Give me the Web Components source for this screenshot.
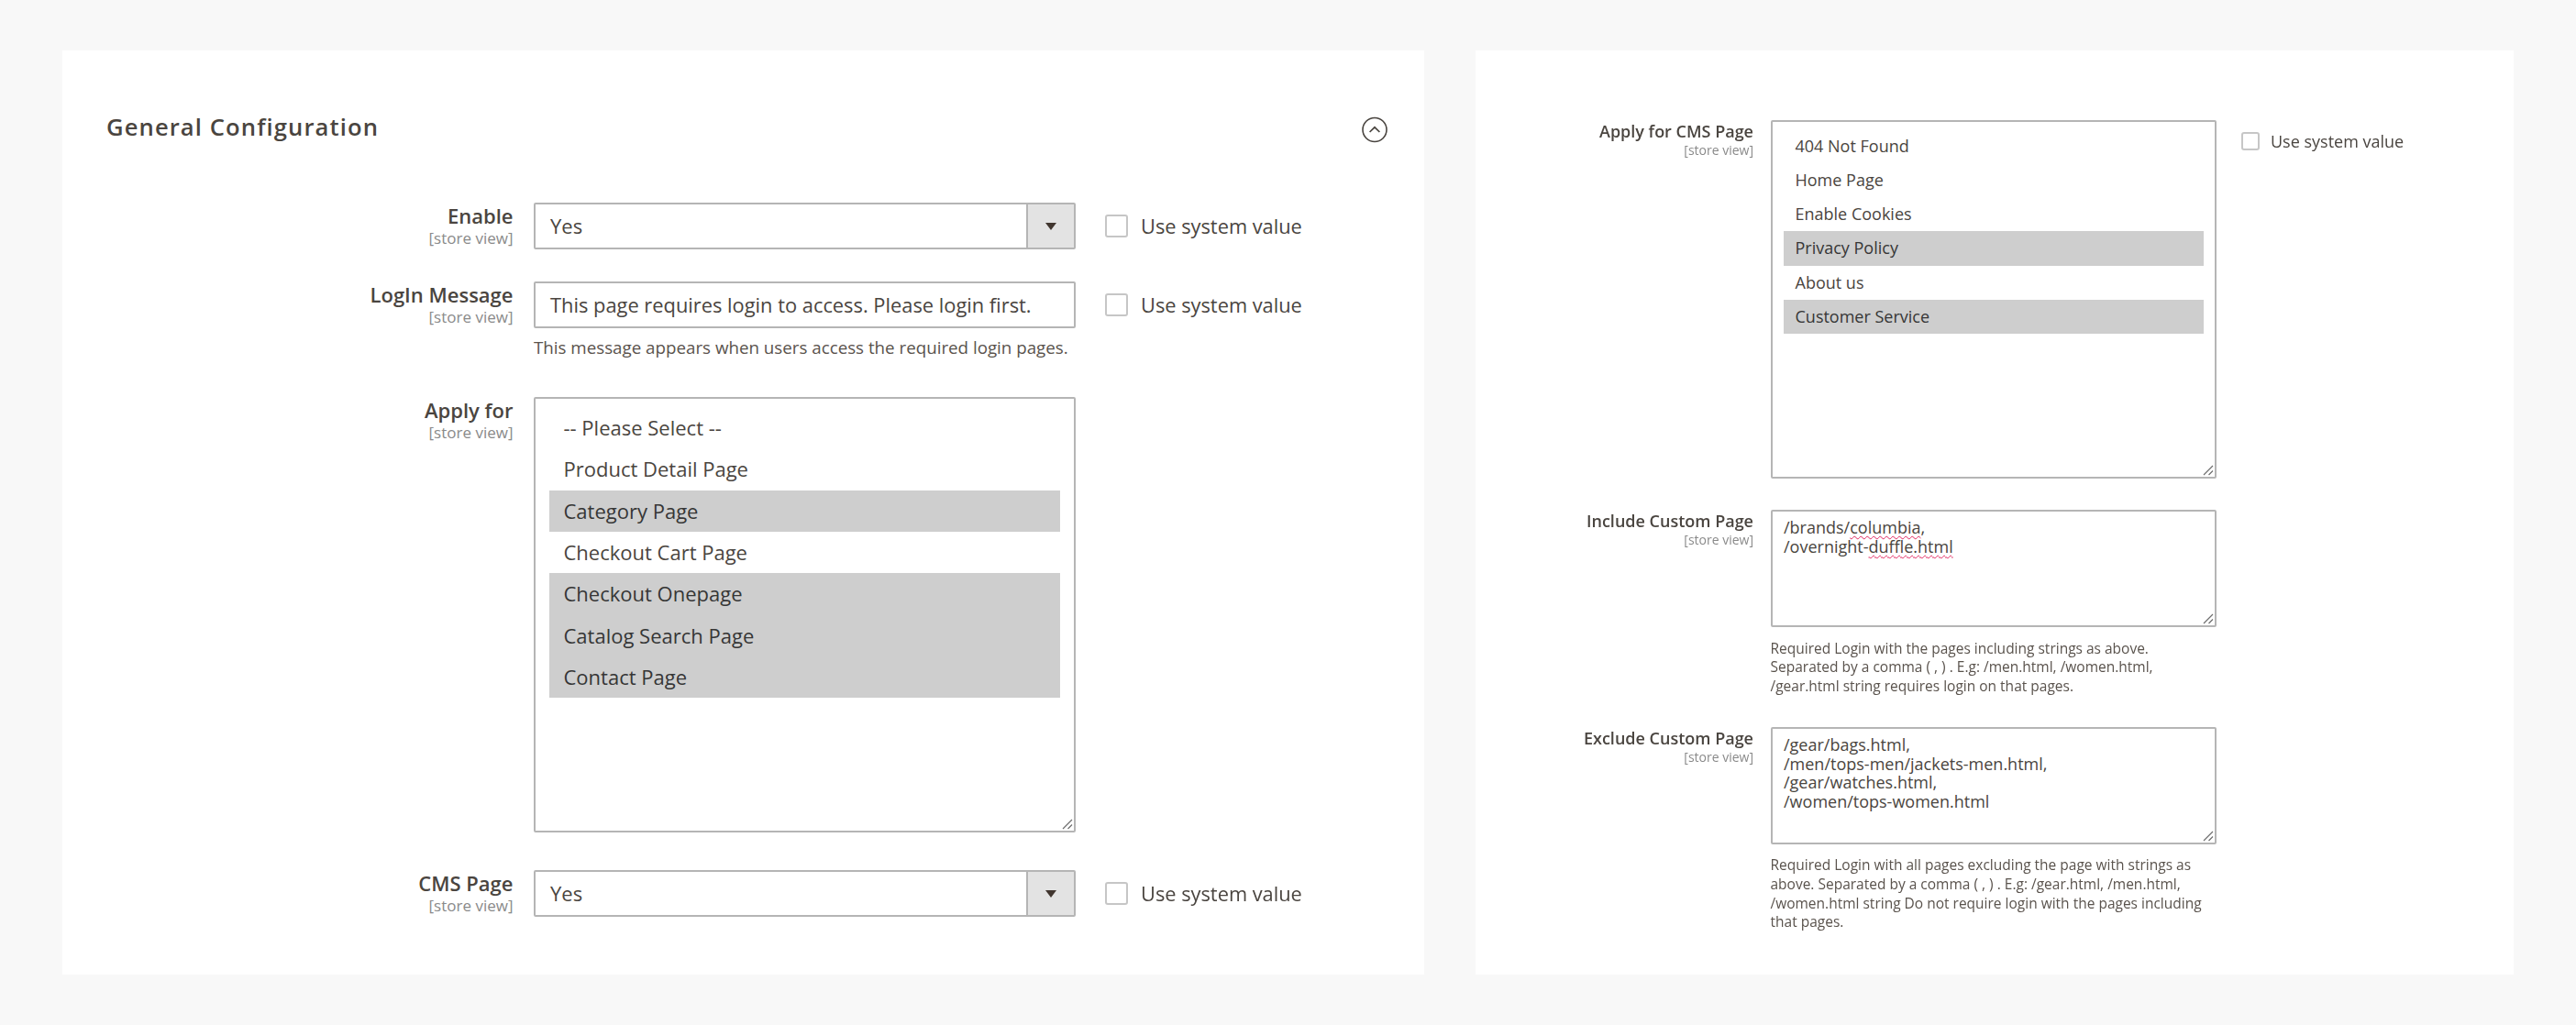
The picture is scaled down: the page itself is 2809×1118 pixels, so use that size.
<!DOCTYPE html>
<html lang="en">
<head>
<meta charset="utf-8">
<title>General Configuration</title>
<style>
    html, body { margin: 0; padding: 0; }
    body { background: #f8f8f8; font-family: "Open Sans", "Noto Sans", sans-serif; color: #4a4540; }
</style>
</head>
<body>

<template id="tpl-page">
    <style>
        /* the reference is a soft upscale, so the whole page is softened a little */
        :host { display: flex; gap: 56.5px; padding: 55px 68px; box-sizing: border-box; width: 2809px; height: 1118px; align-items: flex-start; filter: blur(.5px); }
    </style>
    <slot></slot>
</template>

<template id="tpl-card">
    <style>
        :host { display: flex; flex-direction: column; box-sizing: border-box; background: #fff; height: 1008px; flex: none; }
    </style>
    <slot></slot>
</template>

<template id="tpl-heading">
    <style>
        :host { display: flex; align-items: center; justify-content: space-between; height: 40px; margin: 0 40px 60px 48px; }
        h2 { margin: -4px 0 0; font-size: 25.6px; font-weight: 600; letter-spacing: 1.1px; line-height: 40px; color: #4a4540; }
        svg { display: block; width: 28px; height: 29px; }
    </style>
    <h2><slot></slot></h2>
    <svg viewBox="0 0 28 29" fill="none" stroke="#4a4540">
        <circle cx="14" cy="14.5" r="13" stroke-width="1.6"/>
        <path d="M8.6 17 14 11.8 19.4 17" stroke-width="1.7"/>
    </svg>
</template>

<template id="tpl-field">
    <style>
        :host { display: grid; grid-template-columns: var(--label-w) var(--ctl-w) auto; column-gap: 0; align-items: start; margin-bottom: var(--after, 0); }
        .label { text-align: right; padding-right: var(--label-gap); }
        .name { font-size: var(--label-size); line-height: var(--label-line); margin-top: -1px; font-weight: 600; color: #4a4540; }
        .scope { font-size: var(--scope-size); line-height: var(--scope-line); margin-top: 1px; color: #8a8a8a; }
        .side { padding-left: var(--side-gap); }
        ::slotted([slot="help"]) { display: block; }
    </style>
    <div class="label">
        <div class="name" id="name"></div>
        <div class="scope">[store view]</div>
    </div>
    <div class="control">
        <slot></slot>
        <slot name="help"></slot>
    </div>
    <div class="side"><slot name="side"></slot></div>
</template>

<template id="tpl-select">
    <style>
        :host { display: flex; box-sizing: border-box; height: var(--ctl-h); border: 2px solid #b5b5b5; border-radius: 2px; background: #fff; align-items: stretch; }
        .value { flex: 1; padding-left: 16px; font-size: var(--ctl-size); line-height: 47px; }
        .addon { flex: none; width: 52px; box-sizing: border-box; background: #e3e3e3; border-left: 2px solid #b5b5b5; display: flex; align-items: center; justify-content: center; }
        svg { display: block; width: 12px; height: 8px; }
    </style>
    <div class="value"><slot></slot></div>
    <div class="addon">
        <svg viewBox="0 0 12 8"><path d="M0 0h12L6 8z" fill="#41362f"/></svg>
    </div>
</template>

<template id="tpl-text">
    <style>
        :host { display: block; box-sizing: border-box; height: var(--ctl-h); border: 2px solid #b5b5b5; border-radius: 2px; background: #fff; padding-left: 16px; font-size: 21.85px; line-height: 47px; white-space: nowrap; overflow: hidden; }
    </style>
    <slot></slot>
</template>

<template id="tpl-listbox">
    <style>
        :host { display: block; position: relative; box-sizing: border-box; height: var(--box-h); border: 2px solid #b5b5b5; border-radius: 2px; background: #fff; padding: var(--list-py) var(--list-px) 0; font-size: var(--ctl-size); }
        svg { position: absolute; right: 1px; bottom: 1px; width: 13px; height: 13px; }
    </style>
    <slot></slot>
    <svg viewBox="0 0 13 13" stroke="#6e6e6e" stroke-width="1.2" fill="none"><path d="M2 12 12 2M7.5 12 12 7.5"/></svg>
</template>

<template id="tpl-option">
    <style>
        :host { display: block; height: var(--opt-h); line-height: var(--opt-h); padding-left: var(--opt-px); color: #4a4540; white-space: nowrap; }
        :host([selected]) { background: #cecece; color: #363636; }
    </style>
    <slot></slot>
</template>

<template id="tpl-area">
    <style>
        :host { display: block; position: relative; box-sizing: border-box; height: var(--box-h); border: 2px solid #b5b5b5; border-radius: 2px; background: #fff; padding: 7px 12.5px 0; font-size: var(--ctl-size); line-height: 20.65px; color: #4a4540; }
        svg { position: absolute; right: 1px; bottom: 1px; width: 13px; height: 13px; }
        ::slotted(span) { text-decoration: underline wavy #e0245e 1px; text-underline-offset: 2px; }
    </style>
    <slot></slot>
    <svg viewBox="0 0 13 13" stroke="#6e6e6e" stroke-width="1.2" fill="none"><path d="M2 12 12 2M7.5 12 12 7.5"/></svg>
</template>

<template id="tpl-use">
    <style>
        :host { display: flex; align-items: center; height: var(--use-h); font-size: var(--use-size); white-space: nowrap; color: #4a4540; }
        i { display: block; flex: none; box-sizing: border-box; width: var(--check); height: var(--check); border: 2px solid #c6c6c6; border-radius: 3px; background: #fff; margin-right: var(--check-gap); }
    </style>
    <i></i><slot></slot>
</template>

<template id="tpl-help">
    <style>
        :host { display: block; margin-top: var(--help-mt); font-size: var(--help-size); line-height: var(--help-line); color: #5a534d; white-space: nowrap; }
    </style>
    <slot></slot>
</template>

<cfg-page>
    <cfg-card style="width:1484.5px;padding-top:66px;
        --label-w:514px;--label-gap:22.5px;--ctl-w:591px;--side-gap:31.5px;
        --label-size:22px;--label-line:30px;--scope-size:17px;--scope-line:18px;
        --ctl-h:51px;--ctl-size:22px;--use-h:50px;--use-size:21.8px;--check:25px;--check-gap:14.5px;
        --help-mt:8px;--help-size:18.75px;--help-line:26px;
        --list-py:9px;--list-px:15px;--opt-h:45.33px;--opt-px:15.5px">
        <cfg-heading>General Configuration</cfg-heading>

        <cfg-field name="Enable" style="--after:35px">
            <cfg-select>Yes</cfg-select>
            <cfg-use slot="side">Use system value</cfg-use>
        </cfg-field>

        <cfg-field name="LogIn Message" style="--after:41px">
            <cfg-text>This page requires login to access. Please login first.</cfg-text>
            <cfg-help slot="help">This message appears when users access the required login pages.</cfg-help>
            <cfg-use slot="side">Use system value</cfg-use>
        </cfg-field>

        <cfg-field name="Apply for" style="--after:41px;--box-h:475px">
            <cfg-listbox>
                <cfg-option>-- Please Select --</cfg-option>
                <cfg-option>Product Detail Page</cfg-option>
                <cfg-option selected>Category Page</cfg-option>
                <cfg-option>Checkout Cart Page</cfg-option>
                <cfg-option selected>Checkout Onepage</cfg-option>
                <cfg-option selected>Catalog Search Page</cfg-option>
                <cfg-option selected>Contact Page</cfg-option>
            </cfg-listbox>
        </cfg-field>

        <cfg-field name="CMS Page">
            <cfg-select>Yes</cfg-select>
            <cfg-use slot="side">Use system value</cfg-use>
        </cfg-field>
    </cfg-card>

    <cfg-card style="width:1132px;padding-top:76px;
        --label-w:321.5px;--label-gap:18.5px;--ctl-w:486.5px;--side-gap:27px;
        --label-size:18px;--label-line:26px;--scope-size:14px;--scope-line:14px;
        --ctl-size:18px;--use-h:45px;--use-size:18px;--check:20px;--check-gap:12px;
        --help-mt:12.5px;--help-size:15.5px;--help-line:20.65px;
        --list-py:7.5px;--list-px:12px;--opt-h:37.33px;--opt-px:13px">
        <cfg-field name="Apply for CMS Page" style="--after:34px;--box-h:391px">
            <cfg-listbox>
                <cfg-option>404 Not Found</cfg-option>
                <cfg-option>Home Page</cfg-option>
                <cfg-option>Enable Cookies</cfg-option>
                <cfg-option selected>Privacy Policy</cfg-option>
                <cfg-option>About us</cfg-option>
                <cfg-option selected>Customer Service</cfg-option>
            </cfg-listbox>
            <cfg-use slot="side">Use system value</cfg-use>
        </cfg-field>

        <cfg-field name="Include Custom Page" style="--after:34.5px;--box-h:128px">
            <cfg-area>/brands/<span>columbia</span>,<br>/overnight-<span>duffle.html</span></cfg-area>
            <cfg-help slot="help">Required Login with the pages including strings as above.<br>Separated by a comma ( , ) . E.g: /men.html, /women.html,<br>/gear.html string requires login on that pages.</cfg-help>
        </cfg-field>

        <cfg-field name="Exclude Custom Page" style="--box-h:128px">
            <cfg-area>/gear/bags.html,<br>/men/tops-men/jackets-men.html,<br>/gear/watches.html,<br>/women/tops-women.html</cfg-area>
            <cfg-help slot="help">Required Login with all pages excluding the page with strings as<br>above. Separated by a comma ( , ) . E.g: /gear.html, /men.html,<br>/women.html string Do not require login with the pages including<br>that pages.</cfg-help>
        </cfg-field>
    </cfg-card>
</cfg-page>

<script>
    ((w, d) => {
        // Plain element: clones its template into an open shadow root
        class CfgElement extends HTMLElement {
            constructor() {
                super();
                const tpl = d.getElementById('tpl-' + this.localName.replace('cfg-', ''));
                this.attachShadow({mode: 'open'}).appendChild(d.importNode(tpl.content, true));
            }
        }

        class CfgField extends CfgElement {
            static get observedAttributes() { return ['name']; }

            attributeChangedCallback(attrName, oldVal, newVal) {
                this.shadowRoot.querySelector('#name').textContent = newVal;
            }
        }

        ['page', 'card', 'heading', 'select', 'text', 'listbox', 'option', 'area', 'use', 'help'].forEach(name => {
            customElements.define('cfg-' + name, class extends CfgElement {});
        });
        customElements.define('cfg-field', CfgField);
    })(window, document);
</script>
</body>
</html>
